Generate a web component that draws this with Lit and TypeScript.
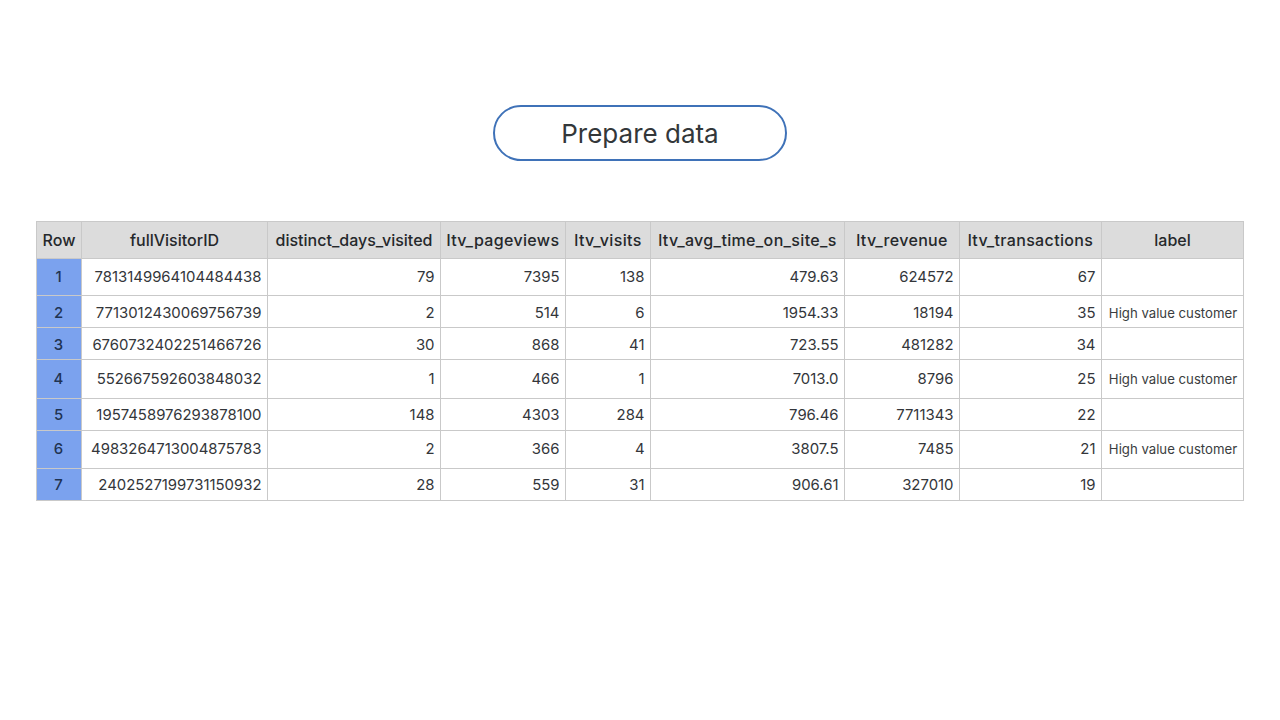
import { LitElement, html, css } from "lit";
import { customElement } from "lit/decorators.js";

const HEAD = ["Row","fullVisitorID","distinct_days_visited","ltv_pageviews","ltv_visits","ltv_avg_time_on_site_s","ltv_revenue","ltv_transactions","label"];
const ROWS = [
  ["1","7813149964104484438","79","7395","138","479.63","624572","67",""],
  ["2","7713012430069756739","2","514","6","1954.33","18194","35","High value customer"],
  ["3","6760732402251466726","30","868","41","723.55","481282","34",""],
  ["4","552667592603848032","1","466","1","7013.0","8796","25","High value customer"],
  ["5","1957458976293878100","148","4303","284","796.46","7711343","22",""],
  ["6","4983264713004875783","2","366","4","3807.5","7485","21","High value customer"],
  ["7","2402527199731150932","28","559","31","906.61","327010","19",""],
];
// Rows whose text sits a pixel off the centre of the row in the reference.
const NUDGE = ["", "down", "down", "", "", "up", ""];

@customElement("app-root")
export class AppRoot extends LitElement {
  static styles = css`
    :host { display: block; width: 1280px; height: 720px; background: #fff; box-sizing: border-box; padding-top: 105px; font-family: Inter, Roboto, sans-serif; color: #2b2e31; overflow: hidden; }
    .top { display: flex; justify-content: center; margin-bottom: 60px; }
    .pill { width: 294px; height: 56px; box-sizing: border-box; border: 2px solid #3f72b8; border-radius: 28px; display: flex; align-items: center; justify-content: center; font-size: 26px; color: #33373a; }
    .table { margin-left: 36px; width: 1208px; display: grid; box-sizing: border-box; border-top: 1px solid #c9c9c9; border-left: 1px solid #c9c9c9;
      grid-template-columns: 45px 186px 173px 125px 85px 194px 115px 142px 142px;
      grid-template-rows: 37px 37px 32px 32px 39px 32px 38px 32px; }
    .cell { box-sizing: border-box; border-right: 1px solid #c9c9c9; border-bottom: 1px solid #c9c9c9; display: flex; align-items: center; justify-content: flex-end; padding: 0 5.5px 0 0; font-size: 14.9px; white-space: nowrap; color: #33363a; }
    .head { background: #dcdcdc; justify-content: center; font-size: 16px; font-weight: 500; padding: 0; color: #25282b; }
    .wide { letter-spacing: 0.35px; }
    .idx { background: #7ba2ee; justify-content: center; font-weight: 500; padding: 0 1px 0 0; color: #1f3352; }
    .label { justify-content: center; font-size: 13.2px; padding: 0 0 0 1px; color: #3a3d40; }
    .down { padding-top: 2px; }
    .up { padding-bottom: 2px; }
  `;
  render() {
    return html`
      <div class="top"><div class="pill">Prepare data</div></div>
      <div class="table">
        ${HEAD.map((h) => html`<div class="cell head ${h.startsWith("ltv_") ? "wide" : ""}">${h}</div>`)}
        ${ROWS.map((r, n) => r.map((v, i) => html`<div class="cell ${NUDGE[n]} ${i === 0 ? "idx" : i === 8 ? "label" : ""}">${v}</div>`))}
      </div>
    `;
  }
}
